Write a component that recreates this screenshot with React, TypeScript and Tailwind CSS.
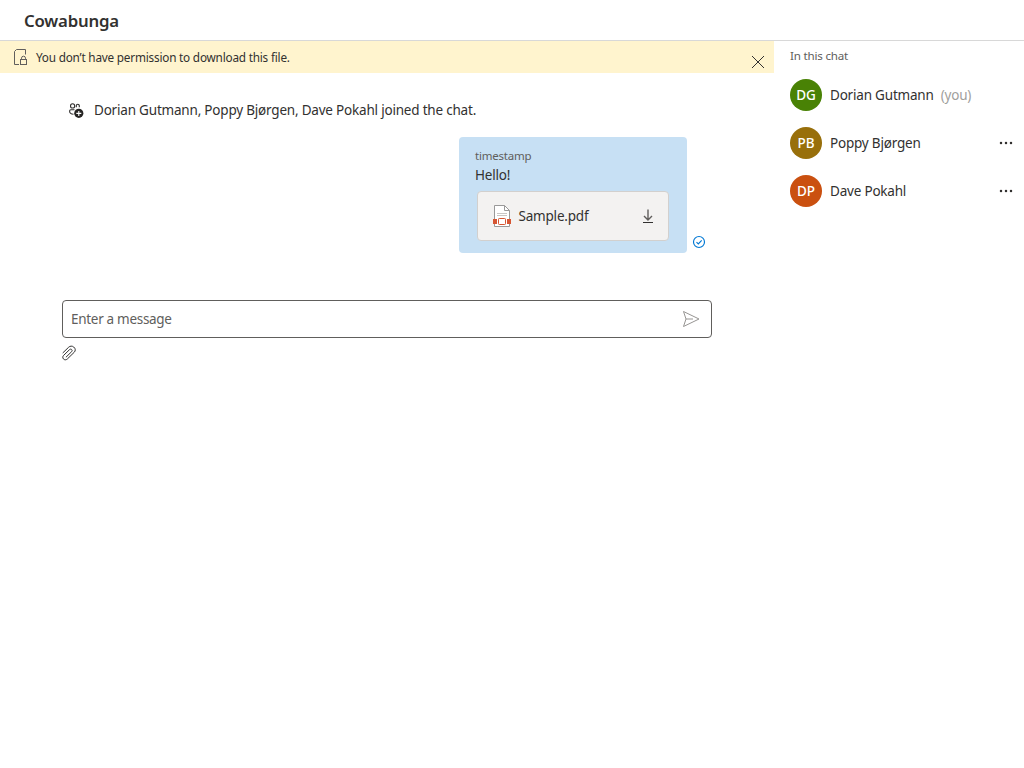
import React from "react";

type Person = { initials: string; name: string; color: string; you?: boolean };

const people: Person[] = [
  { initials: "DG", name: "Dorian Gutmann", color: "bg-[#498205]", you: true },
  { initials: "PB", name: "Poppy Bjørgen", color: "bg-[#986f0b]" },
  { initials: "DP", name: "Dave Pokahl", color: "bg-[#ca5010]" },
];

function FileLockIcon() {
  return (
    <svg width="14" height="18" viewBox="0 0 14 18" fill="none" stroke="#605e5c" strokeWidth="1">
      <path d="M5 15.500H.5V2.500L2.500 .5H11.500V5.500" />
      <rect x="6.500" y="10.500" width="6" height="5" />
      <path d="M7.500 10.500V9.200a2 2 0 0 1 4 0v1.300" />
    </svg>
  );
}

function PeopleAddIcon() {
  return (
    <svg width="16" height="16" viewBox="0 0 16 16" fill="none" stroke="#323130" strokeWidth="1.100">
      <circle cx="4.600" cy="3.900" r="2.100" />
      <path d="M8.300 5.200V3.800a1.500 1.500 0 0 1 3 0V5.200" />
      <path d="M5.500 12.200c-2.500 0-3.900-1-3.900-3.200 0-.9.500-1.300 1.300-1.300H6.500" />
      <circle cx="10.800" cy="11.300" r="4.600" fill="#252423" stroke="none" />
      <path d="M10.800 8.900v5M8.300 11.400h5" stroke="#fff" />
    </svg>
  );
}

function PdfIcon() {
  return (
    <svg width="20" height="24" viewBox="0 0 20 24" fill="none">
      <path d="M2.500 1.500H12.500L17.500 6.500V22.500H2.500Z" fill="#fff" stroke="#999" />
      <path d="M12.500 1.500V6.500H17.500" stroke="#999" />
      <path d="M5 9.500H15M5 11.500H15" stroke="#c8c6c4" />
      <path d="M1 15h4v5H1zM15 15h4v5h-4z" fill="#d65532" />
      <rect x="6.500" y="14.500" width="7" height="6" rx=".8" fill="#fff" stroke="#d65532" />
    </svg>
  );
}

export default function App() {
  return (
    <div className="flex h-screen flex-col overflow-hidden bg-white font-['Noto_Sans','Open_Sans',sans-serif] text-[13.5px] tracking-[-0.2px] text-[#323130]">
      <header className="flex h-[41px] shrink-0 items-center border-b border-[#d8d8d8] px-6 pt-[2px]">
        <h1 className="text-[16.8px] leading-6 font-semibold">Cowabunga</h1>
      </header>
      <div className="flex flex-1">
        <main className="w-[774px]">
          <div className="flex h-8 bg-[#fff4ce]">
            <div className="ml-[14px] mt-2 w-[22px]"><FileLockIcon /></div>
            <p className="mt-2 text-[11.75px] leading-4">You don’t have permission to download this file.</p>
            <svg className="ml-auto mr-[9px] mt-[14px]" width="14" height="14" viewBox="0 0 14 14" stroke="#323130">
              <path d="M1 1L13 13M13 1L1 13" />
            </svg>
          </div>
          <div className="ml-[68px] mt-[27px] flex h-5 items-center gap-[10px]">
            <PeopleAddIcon />
            <p className="leading-[22px]">Dorian Gutmann, Poppy Bjørgen, Dave Pokahl joined the chat.</p>
          </div>
          <div className="ml-[459px] mt-[17px] flex items-end gap-[5px]">
            <div className="h-[116px] w-[228px] rounded bg-[#c7e0f4] pl-4 pt-[11px]">
              <p className="text-[11.5px] leading-4 text-[#605e5c]">timestamp</p>
              <p className="leading-[22px]">Hello!</p>
              <div className="ml-[2px] mt-[5px] flex h-[50px] w-[192px] items-center rounded border border-[#d2d0ce] bg-[#f3f2f1] pl-[14px]">
                <PdfIcon />
                <span className="ml-[6.5px] leading-5">Sample.pdf</span>
                <svg className="ml-auto mr-[13px]" width="14" height="16" viewBox="0 0 14 16" fill="none" stroke="#605e5c">
                  <path d="M7 1.500V11.500M3 8L7 12L11 8" strokeWidth="1.400" />
                  <path d="M2 14.500H12" stroke="#323130" />
                </svg>
              </div>
            </div>
            <svg className="mb-1" width="14" height="14" viewBox="0 0 14 14" fill="none" stroke="#0078d4" strokeWidth="1.150">
              <circle cx="7" cy="7" r="5.500" />
              <path d="M4.500 7.200L6.300 8.900L9.700 5.300" />
            </svg>
          </div>
          <div className="ml-[62px] mt-[47px] flex h-[38px] w-[650px] items-center justify-between rounded border border-[#605e5c] pl-2 pr-[11px]">
            <span className="leading-5 tracking-[-0.3px] text-[#605e5c]">Enter a message</span>
            <svg width="18" height="18" viewBox="0 0 18 18" fill="none" stroke="#979593">
              <path d="M1.500 1.500L17 9L1.500 16.500L4 9ZM4 9H11" strokeLinejoin="round" />
            </svg>
          </div>
          <svg className="ml-[61px] mt-[7px]" width="16" height="16" viewBox="0 0 16 16" fill="none" stroke="#323130" strokeLinecap="round">
            <path d="M2 7.700L7.700 2.200C9 .9 11.200.7 12.700 2C14.700 3.600 14.700 5.800 13.200 7.300L6.300 14C5.100 15.200 3.300 15 2.400 13.900C1.500 12.800 1.600 11.400 2.600 10.400L8.600 4.600C9.200 4 10.200 4 10.700 4.600C11.300 5.200 11.300 6 10.700 6.600L5.200 12" />
          </svg>
        </main>
        <aside className="flex-1 pl-4 pr-[11px] pt-[7px]">
          <p className="text-[11.6px] leading-4 text-[#605e5c]">In this chat</p>
          <div className="mt-[7px]">
            {people.map((p) => (
              <div key={p.initials} className="flex h-12 items-center">
                <div className={`flex size-8 items-center justify-center rounded-full text-[13.5px] leading-5 font-medium tracking-normal text-white ${p.color}`}>{p.initials}</div>
                <span className="ml-2 leading-[22px]">{p.name}</span>
                {p.you ? (
                  <span className="ml-[7px] leading-[22px] text-[#a19f9d]">(you)</span>
                ) : (
                  <svg className="ml-auto" width="14" height="4" viewBox="0 0 14 4" fill="#323130">
                    <circle cx="2" cy="2" r="1.250" />
                    <circle cx="7" cy="2" r="1.250" />
                    <circle cx="12" cy="2" r="1.250" />
                  </svg>
                )}
              </div>
            ))}
          </div>
        </aside>
      </div>
    </div>
  );
}
